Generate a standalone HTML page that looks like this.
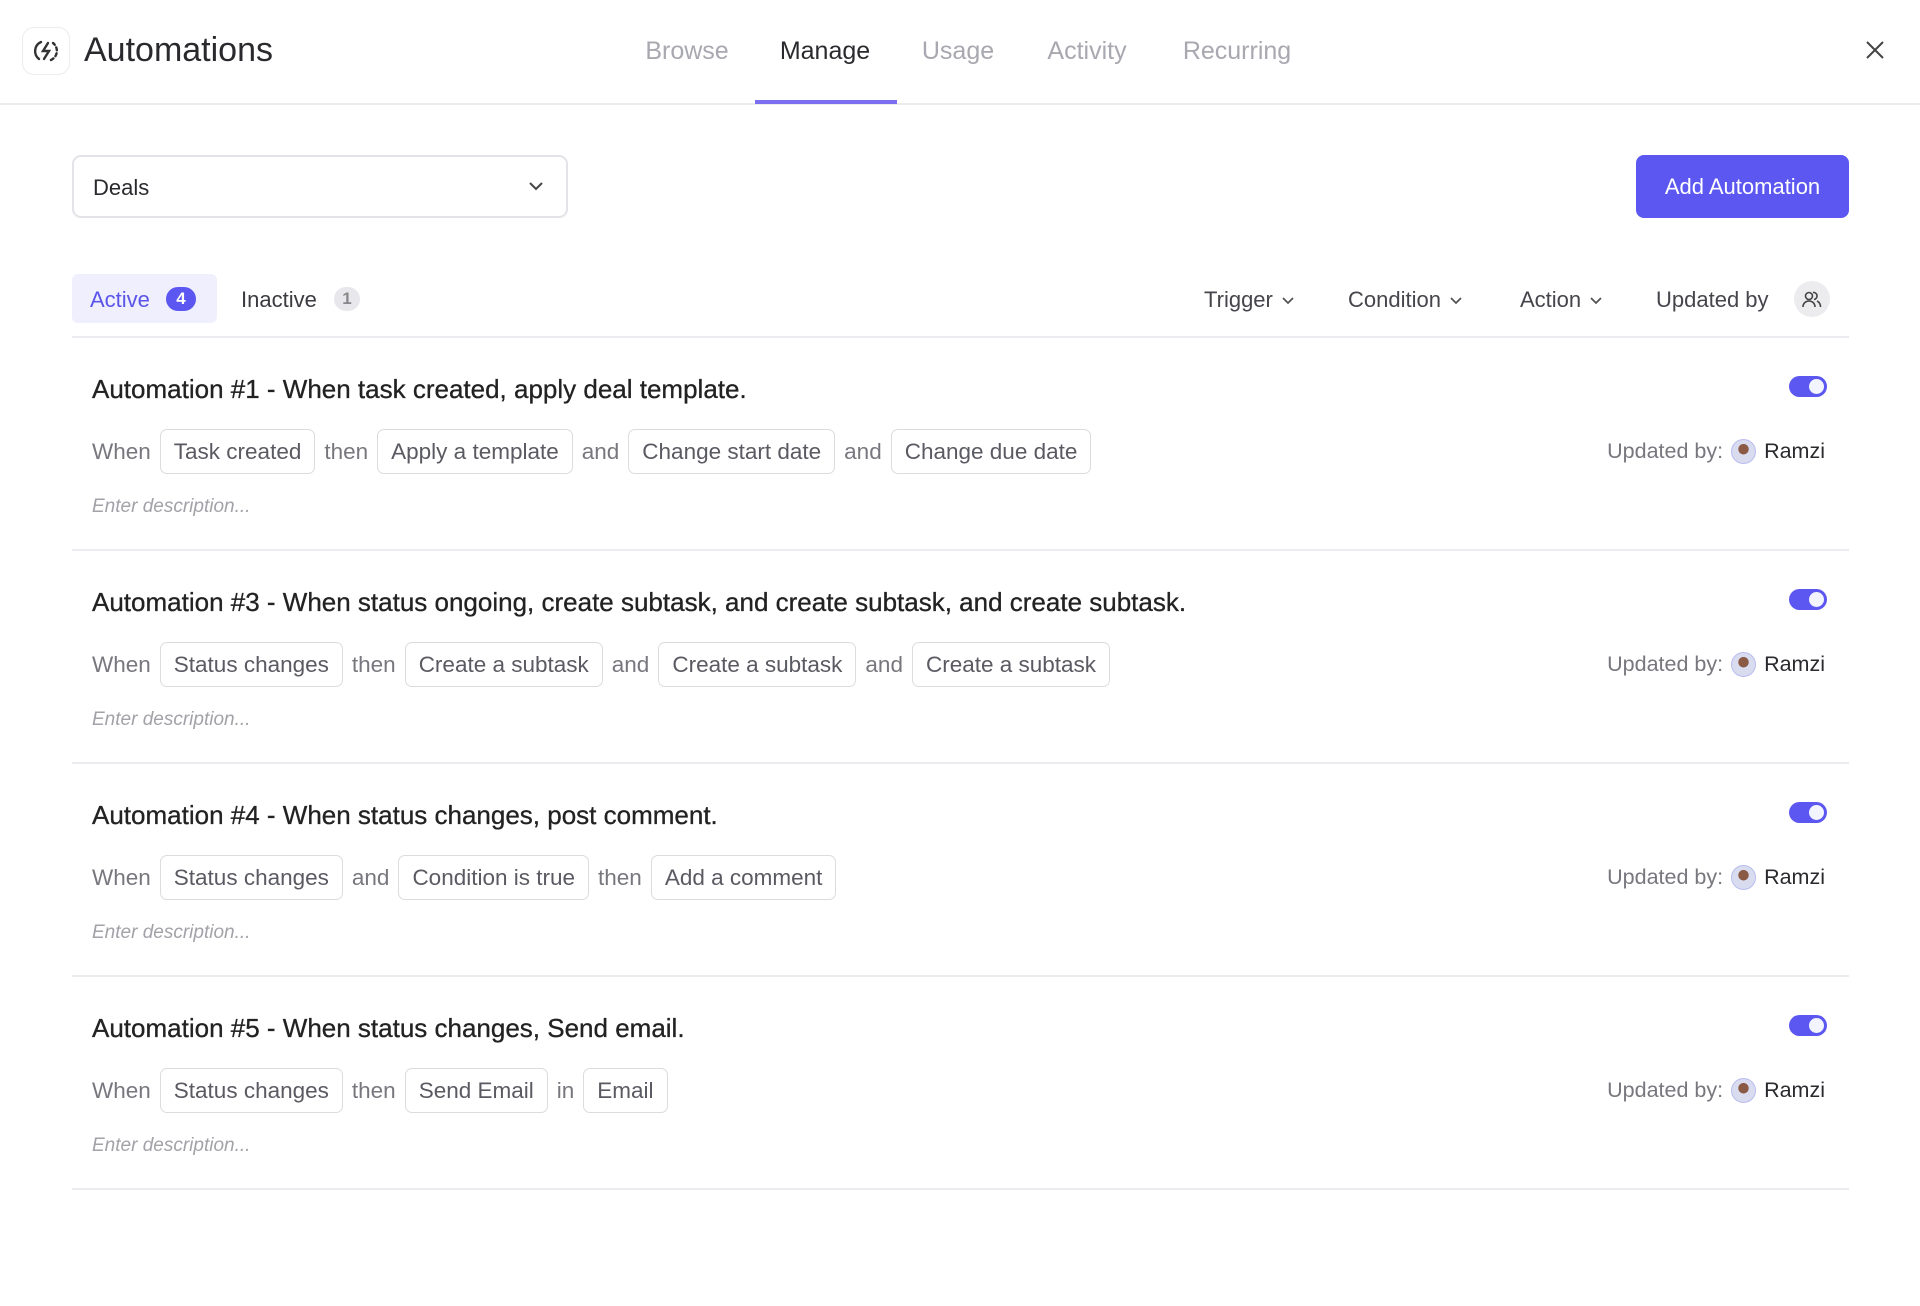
<!DOCTYPE html>
<html><head><meta charset="utf-8"><style>
*{box-sizing:border-box;margin:0;padding:0}
body{width:1920px;height:1306px;background:#fff;font-family:"Liberation Sans",sans-serif;color:#2a2a2e;position:relative;overflow:hidden}
.abs{position:absolute}
.hdr{left:0;top:0;width:1920px;height:105px;border-bottom:2px solid #ececef}
.logo{left:22px;top:27px;width:48px;height:48px;border:1px solid #ececef;border-radius:12px;display:flex;align-items:center;justify-content:center}
.title{left:84px;top:31px;font-size:34px;color:#2a2a2e}
.nav{top:37px;font-size:25px;color:#a8a8b0;transform:translateX(-50%)}
.nav.on{color:#2a2a2e}
.ul{left:755px;top:100px;width:142px;height:4px;background:#7b6ef0}
.sel{left:72px;top:155px;width:496px;height:63px;border:2px solid #e3e3e8;border-radius:9px;font-size:22px;padding:18px 0 0 19px}
.btn{left:1636px;top:155px;width:213px;height:63px;background:#5b57f0;border-radius:8px;color:#fff;font-size:22px;display:flex;align-items:center;justify-content:center}
.pill{left:72px;top:274px;width:145px;height:49px;background:#efeffe;border-radius:6px}
.t2{font-size:22px;top:287px}
.badge{width:30px;height:24px;border-radius:12px;font-size:17px;font-weight:bold;display:flex;align-items:center;justify-content:center;top:287px}
.filt{top:287px;font-size:22px;color:#45454c;display:flex;align-items:center;gap:8px}
.line{left:72px;width:1777px;height:2px;background:#ececf0}
.card{left:92px;width:1740px}
.ct{font-size:26px;color:#222;position:absolute;top:37px;left:0;white-space:nowrap;-webkit-text-stroke:0.3px #222}
.row{position:absolute;top:92px;left:0;display:flex;align-items:center;gap:9px;font-size:22.5px;color:#77777e}
.chip{height:45px;border:1.5px solid #dcdce0;border-radius:7px;padding:0 13px;display:flex;align-items:center;color:#5a5a62;font-size:22.5px}
.desc{position:absolute;top:159px;left:0;font-size:19px;font-style:italic;color:#a2a2a8}
.tog{position:absolute;right:5px;top:39px;width:38px;height:21px;border-radius:11px;background:#5b57f0}
.tog:after{content:"";position:absolute;right:3px;top:3px;width:15px;height:15px;border-radius:50%;background:#f2f4ff}
.upd{position:absolute;right:7px;top:102px;font-size:21.5px;color:#77777e;display:flex;align-items:center;gap:8px}
.upd b{font-weight:normal;color:#2a2a2e}
.av{width:25px;height:25px;border-radius:50%;background:radial-gradient(circle at 50% 40%,#8a5a45 0 28%,#d9dbef 30%);border:1.5px solid #b9bdf0}
</style></head><body>
<div class="abs hdr"></div>
<div class="abs logo"><svg width="30" height="30" viewBox="0 0 30 30" fill="none" stroke="#333" stroke-width="2.4" stroke-linecap="round"><path d="M10 6a10 10 0 0 0-2 17" /><path d="M20 24a10 10 0 0 0 2-17" stroke-dasharray="3 3"/><path d="M17 7l-5 8h6l-5 8"/></svg></div>
<div class="abs title">Automations</div>
<div class="abs nav" style="left:687px">Browse</div>
<div class="abs nav on" style="left:825px">Manage</div>
<div class="abs nav" style="left:958px">Usage</div>
<div class="abs nav" style="left:1087px">Activity</div>
<div class="abs nav" style="left:1237px">Recurring</div>
<div class="abs ul"></div>
<svg class="abs" style="left:1865px;top:40px" width="20" height="20" viewBox="0 0 20 20" stroke="#444" stroke-width="2"><path d="M2 2L18 18M18 2L2 18"/></svg>
<div class="abs sel">Deals</div>
<svg class="abs" style="left:528px;top:180px" width="16" height="12" viewBox="0 0 16 12" fill="none" stroke="#444" stroke-width="2"><path d="M2 3l6 6 6-6"/></svg>
<div class="abs btn">Add Automation</div>
<div class="abs pill"></div>
<div class="abs t2" style="left:90px;color:#5a55e8">Active</div>
<div class="abs badge" style="left:166px;background:#5b57f0;color:#fff">4</div>
<div class="abs t2" style="left:241px;color:#3a3a40">Inactive</div>
<div class="abs badge" style="left:334px;width:26px;background:#e8e8ec;color:#888">1</div>
<div class="abs filt" style="left:1204px">Trigger <svg width="14" height="10" viewBox="0 0 14 10" fill="none" stroke="#555" stroke-width="1.8"><path d="M2 3l5 5 5-5"/></svg></div>
<div class="abs filt" style="left:1348px">Condition <svg width="14" height="10" viewBox="0 0 14 10" fill="none" stroke="#555" stroke-width="1.8"><path d="M2 3l5 5 5-5"/></svg></div>
<div class="abs filt" style="left:1520px">Action <svg width="14" height="10" viewBox="0 0 14 10" fill="none" stroke="#555" stroke-width="1.8"><path d="M2 3l5 5 5-5"/></svg></div>
<div class="abs filt" style="left:1656px">Updated by</div>
<div class="abs" style="left:1794px;top:281px;width:36px;height:36px;border-radius:50%;background:#ececef;display:flex;align-items:center;justify-content:center"><svg width="20" height="18" viewBox="0 0 20 18" fill="none" stroke="#444" stroke-width="1.6"><circle cx="7" cy="6" r="3.5"/><path d="M1 17c0-4 3-6 6-6s6 2 6 6"/><path d="M11 2.5a3.5 3.5 0 0 1 1 7M15 11c2 1 3.5 3 3.5 6"/></svg></div>
<div class="abs line" style="top:336px"></div>

<div class="abs card" style="top:337px"><div class="ct">Automation #1 - When task created, apply deal template.</div>
<div class="row">When<span class="chip">Task created</span>then<span class="chip">Apply a template</span>and<span class="chip">Change start date</span>and<span class="chip">Change due date</span></div>
<div class="desc">Enter description...</div><div class="tog"></div><div class="upd">Updated by: <span class="av"></span><b>Ramzi</b></div></div>
<div class="abs line" style="top:549px"></div>

<div class="abs card" style="top:550px"><div class="ct">Automation #3 - When status ongoing, create subtask, and create subtask, and create subtask.</div>
<div class="row">When<span class="chip">Status changes</span>then<span class="chip">Create a subtask</span>and<span class="chip">Create a subtask</span>and<span class="chip">Create a subtask</span></div>
<div class="desc">Enter description...</div><div class="tog"></div><div class="upd">Updated by: <span class="av"></span><b>Ramzi</b></div></div>
<div class="abs line" style="top:762px"></div>

<div class="abs card" style="top:763px"><div class="ct">Automation #4 - When status changes, post comment.</div>
<div class="row">When<span class="chip">Status changes</span>and<span class="chip">Condition is true</span>then<span class="chip">Add a comment</span></div>
<div class="desc">Enter description...</div><div class="tog"></div><div class="upd">Updated by: <span class="av"></span><b>Ramzi</b></div></div>
<div class="abs line" style="top:975px"></div>

<div class="abs card" style="top:976px"><div class="ct">Automation #5 - When status changes, Send email.</div>
<div class="row">When<span class="chip">Status changes</span>then<span class="chip">Send Email</span>in<span class="chip">Email</span></div>
<div class="desc">Enter description...</div><div class="tog"></div><div class="upd">Updated by: <span class="av"></span><b>Ramzi</b></div></div>
<div class="abs line" style="top:1188px"></div>
</body></html>
